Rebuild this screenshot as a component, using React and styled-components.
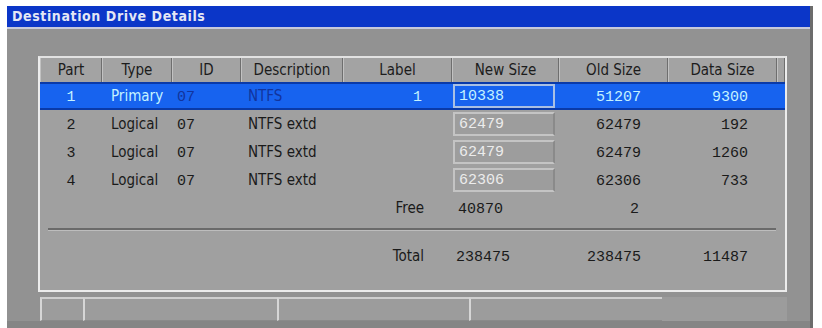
import React from "react";
import styled, { createGlobalStyle, css } from "styled-components";

const GlobalStyle = createGlobalStyle`
  *, *::before, *::after {
    box-sizing: border-box;
  }
  body {
    margin: 0;
    background: #ffffff;
    font-family: "Liberation Sans Narrow", "DejaVu Sans Condensed", "Liberation Sans", sans-serif;
  }
`;

const COLS = "62px 70px 69px 102px 109px 107px 109px 109px 8px";

const Window = styled.div`
  margin: 6px 0 0 7px;
  width: 806px;
  height: 322px;
  background: #929292;
  border-right: 3px solid #6c6c6c;
  display: flex;
  flex-direction: column;
`;

const TitleBar = styled.div`
  height: 23px;
  background: #0b36c8;
  color: #e4e7f5;
  font-family: "DejaVu Sans Condensed", "Liberation Sans", sans-serif;
  font-weight: bold;
  font-size: 14px;
  line-height: 21px;
  padding-left: 5px;
  letter-spacing: 0.6px;
  border-bottom: 2px solid #c7c9dc;
`;

const Body = styled.div`
  flex: 1;
  padding: 27px 0 0 31px;
  display: flex;
  flex-direction: column;
`;

const Panel = styled.div`
  width: 749px;
  height: 236px;
  background: #a0a0a0;
  border: 2px solid #ececec;
  border-top-color: #e2e2e2;
`;

const Grid = styled.div`
  display: grid;
  grid-template-columns: ${COLS};
  height: ${(p) => p.$h || 28}px;
  margin-top: ${(p) => p.$mt || 0}px;
  align-items: center;
  ${(p) =>
    p.$selected &&
    css`
      background: #1763ef;
      border-top: 2px solid #0a3aa8;
      border-bottom: 2px solid #0a3aa8;
      color: #c4f2ff;
    `}
`;

const Head = styled.div`
  height: 100%;
  display: flex;
  align-items: center;
  justify-content: center;
  background: #a3a3a3;
  border-right: 1px solid #6e6e6e;
  border-left: 1px solid #c2c2c2;
  color: #1c1c1c;
  font-size: 15px;
`;

const Cell = styled.div`
  font-size: 15px;
  color: ${(p) => p.$color || "inherit"};
  text-align: ${(p) => p.$align || "left"};
  padding-left: ${(p) => p.$pl || 0}px;
  padding-right: ${(p) => p.$pr || 0}px;
  white-space: nowrap;
`;

const Num = styled.span`
  font-family: "Liberation Mono", "DejaVu Sans Mono", monospace;
  font-size: 15px;
`;

const SizeBox = styled.div`
  width: 102px;
  height: 24px;
  margin-left: 1px;
  padding-left: 4px;
  display: flex;
  align-items: center;
  border: 2px solid ${(p) => (p.$active ? "#a9c0e4" : "#c4c4c4")};
  border-right-color: ${(p) => (p.$active ? "#a9c0e4" : "#8a8a8a")};
  background: ${(p) => (p.$active ? "#1763ef" : "#9d9d9d")};
  color: ${(p) => (p.$active ? "#c4f2ff" : "#ececec")};
`;

const Rows = styled.div`
  color: #1a1a1a;
`;

const Divider = styled.div`
  margin: 6px 9px 0 8px;
  height: 3px;
  background: #6a6a6a;
  border-bottom: 1px solid #bdbdbd;
`;

const StatusBar = styled.div`
  margin-top: 5px;
  margin-left: 2px;
  display: grid;
  grid-template-columns: 43px 194px 192px 193px 125px;
  height: 24px;
`;

const Segment = styled.div`
  background: #9c9c9c;
  ${(p) =>
    !p.$flat &&
    css`
      border-left: 2px solid #d6d6d6;
      border-top: 2px solid #cfcfcf;
      border-bottom: 1px solid #8a8a8a;
    `}
`;

const Footer = styled.div`
  height: 7px;
  background: #858585;
`;

const parts = [
  { part: "1", type: "Primary", id: "07", desc: "NTFS", label: "1", newSize: "10338", oldSize: "51207", data: "9300", selected: true },
  { part: "2", type: "Logical", id: "07", desc: "NTFS extd", label: "", newSize: "62479", oldSize: "62479", data: "192" },
  { part: "3", type: "Logical", id: "07", desc: "NTFS extd", label: "", newSize: "62479", oldSize: "62479", data: "1260" },
  { part: "4", type: "Logical", id: "07", desc: "NTFS extd", label: "", newSize: "62306", oldSize: "62306", data: "733" },
];

const headers = ["Part", "Type", "ID", "Description", "Label", "New Size", "Old Size", "Data Size", ""];

export default function App() {
  return (
    <>
      <GlobalStyle />
      <Window>
        <TitleBar>Destination Drive Details</TitleBar>
        <Body>
          <Panel>
            <Grid $h={24}>
              {headers.map((h, i) => (
                <Head key={i}>{h}</Head>
              ))}
            </Grid>
            <Rows>
              {parts.map((r) => (
                <Grid key={r.part} $selected={r.selected}>
                  <Cell $align="center"><Num>{r.part}</Num></Cell>
                  <Cell $pl={9}>{r.type}</Cell>
                  <Cell $pl={5} $color={r.selected ? "#12349c" : undefined}><Num>{r.id}</Num></Cell>
                  <Cell $pl={7} $color={r.selected ? "#12349c" : undefined}>{r.desc}</Cell>
                  <Cell $align="right" $pr={30}><Num>{r.label}</Num></Cell>
                  <Cell>
                    <SizeBox $active={r.selected}><Num>{r.newSize}</Num></SizeBox>
                  </Cell>
                  <Cell $align="right" $pr={27}><Num>{r.oldSize}</Num></Cell>
                  <Cell $align="right" $pr={29}><Num>{r.data}</Num></Cell>
                  <Cell />
                </Grid>
              ))}
              <Grid>
                <Cell />
                <Cell />
                <Cell />
                <Cell />
                <Cell $align="right" $pr={28}>Free</Cell>
                <Cell $pl={6}><Num>40870</Num></Cell>
                <Cell $align="right" $pr={29}><Num>2</Num></Cell>
                <Cell />
                <Cell />
              </Grid>
              <Divider />
              <Grid $mt={11}>
                <Cell />
                <Cell />
                <Cell />
                <Cell />
                <Cell $align="right" $pr={28}>Total</Cell>
                <Cell $pl={4}><Num>238475</Num></Cell>
                <Cell $align="right" $pr={27}><Num>238475</Num></Cell>
                <Cell $align="right" $pr={29}><Num>11487</Num></Cell>
                <Cell />
              </Grid>
            </Rows>
          </Panel>
          <StatusBar>
            <Segment />
            <Segment />
            <Segment />
            <Segment />
            <Segment $flat />
          </StatusBar>
        </Body>
        <Footer />
      </Window>
    </>
  );
}
